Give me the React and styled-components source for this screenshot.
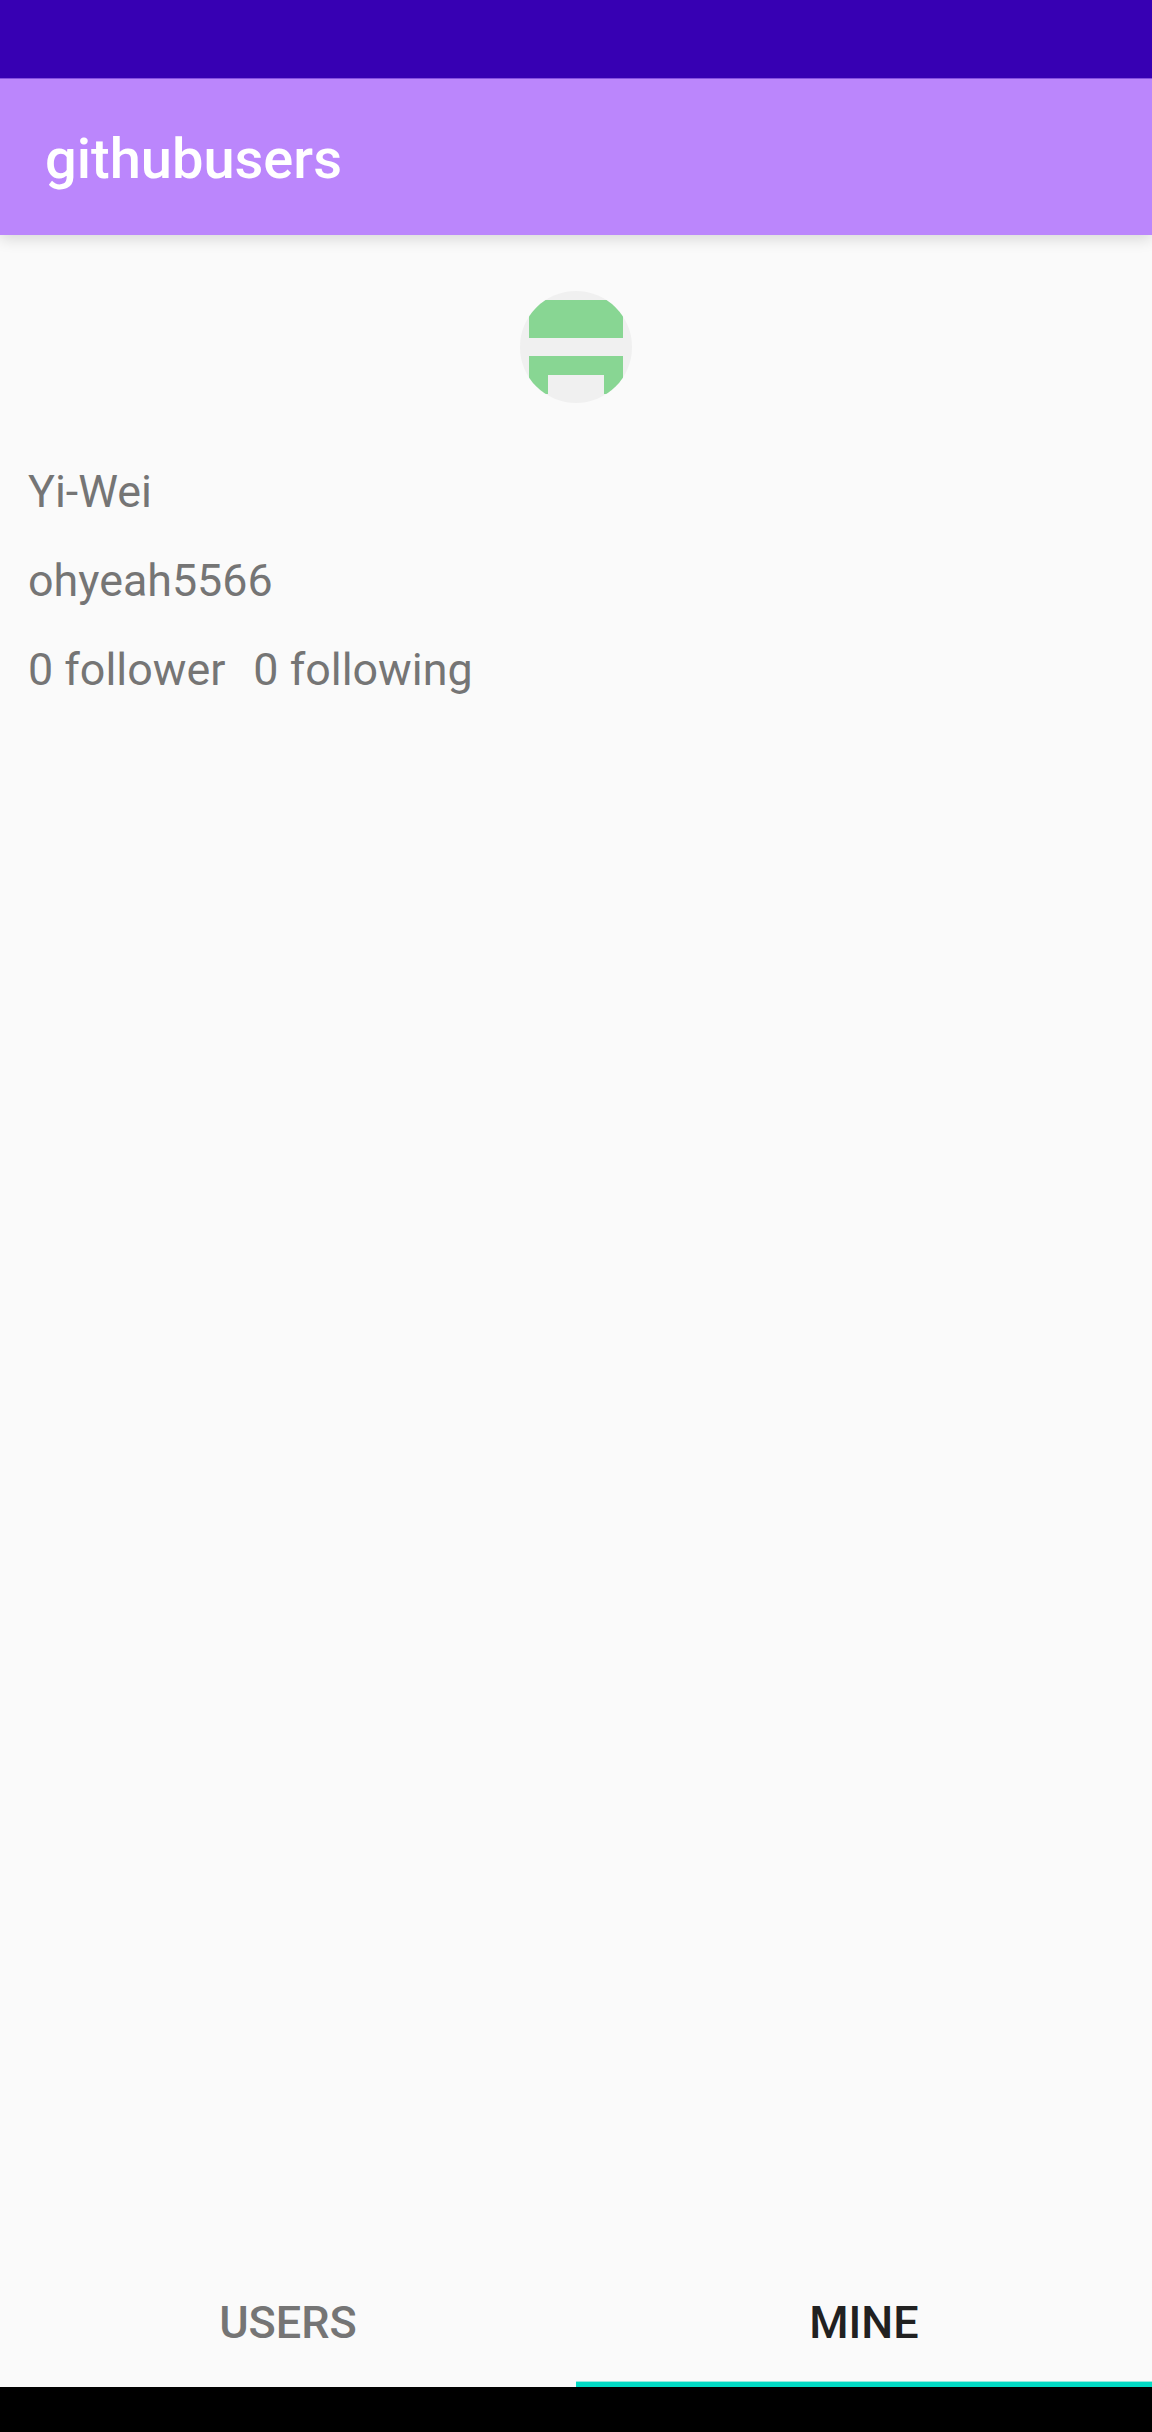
import React from 'react';
import styled, { createGlobalStyle } from 'styled-components';

const GlobalStyle = createGlobalStyle`
  * { box-sizing: border-box; }
  body { margin: 0; background: #fafafa; }
`;

const Screen = styled.div`
  display: flex;
  flex-direction: column;
  height: 2432px;
  background: #fafafa;
  font-family: Roboto, "Liberation Sans", sans-serif;
`;

const StatusBar = styled.div`
  flex: none;
  height: 78px;
  background: #3700b3;
`;

const Toolbar = styled.header`
  flex: none;
  display: flex;
  align-items: center;
  height: 157px;
  padding: 3px 45px 0;
  border-top: 1px solid #8650df;
  background: #bb86fc;
  box-shadow: 0 4px 14px rgba(0, 0, 0, 0.14);
  clip-path: inset(0 0 -30px 0);
`;

const Title = styled.h1`
  margin: 0;
  font-size: 56px;
  line-height: 66px;
  font-weight: 500;
  color: #fff;
`;

const Profile = styled.main`
  flex: 1;
  display: flex;
  flex-direction: column;
  padding: 56px 28px 0;
`;

const Avatar = styled.svg`
  display: block;
  align-self: center;
  width: 112px;
  height: 112px;
  margin-bottom: 62px;
`;

const Line = styled.div`
  display: flex;
  gap: 28px;
  height: 53px;
  margin-bottom: 36px;
  font-size: 44.8px;
  line-height: 53px;
  color: #757575;
  white-space: nowrap;
`;

const Tabs = styled.nav`
  flex: none;
  display: flex;
  height: 135px;
`;

const Tab = styled.div`
  flex: 1;
  display: flex;
  align-items: center;
  justify-content: center;
  border-bottom: 5px solid ${(p) => (p.$active ? '#03dac5' : 'transparent')};
  box-shadow: ${(p) => (p.$active ? 'inset 0 -1px 0 #97ebe1' : 'none')};
  padding-top: 10px;
  font-size: 45px;
  line-height: 53px;
  font-weight: 500;
  color: ${(p) => (p.$active ? '#212121' : '#757575')};
`;

const NavBar = styled.div`
  flex: none;
  height: 45px;
  background: #000;
`;

export default function App() {
  return (
    <Screen>
      <GlobalStyle />
      <StatusBar />
      <Toolbar>
        <Title>githubusers</Title>
      </Toolbar>
      <Profile>
        <Avatar viewBox="0 0 112 112">
          <defs>
            <clipPath id="round">
              <circle cx="56" cy="56" r="56" />
            </clipPath>
          </defs>
          <g clipPath="url(#round)">
            <rect width="112" height="112" fill="#f0f0f0" />
            <path d="M9 9H103V47H9ZM9 65H103V103H84V84H28V103H9Z" fill="#88d693" />
          </g>
        </Avatar>
        <Line>Yi-Wei</Line>
        <Line>ohyeah5566</Line>
        <Line>
          <span>0 follower</span>
          <span>0 following</span>
        </Line>
      </Profile>
      <Tabs>
        <Tab>USERS</Tab>
        <Tab $active>MINE</Tab>
      </Tabs>
      <NavBar />
    </Screen>
  );
}
